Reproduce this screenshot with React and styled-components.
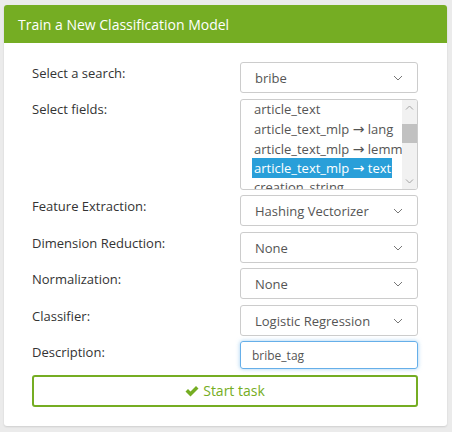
import React from 'react';
import styled, { createGlobalStyle } from 'styled-components';

const GlobalStyle = createGlobalStyle`
  html, body {
    margin: 0;
    padding: 0;
  }
  body {
    background: #ebebeb;
    font-family: 'Open Sans', 'Liberation Sans', sans-serif;
    color: #333;
  }
`;

const Page = styled.div`
  width: 452px;
  height: 432px;
  padding: 5px 5px 0 4px;
  box-sizing: border-box;
`;

const Panel = styled.div`
  width: 443px;
  background: #fff;
  border-radius: 3px;
  box-shadow: 0 1px 2px rgba(0, 0, 0, 0.12);
  overflow: hidden;
`;

const Header = styled.div`
  height: 38px;
  background: #75ad23;
  color: #fff;
  font-size: 14px;
  padding-left: 14px;
  display: flex;
  align-items: center;
`;

const Body = styled.div`
  padding: 19px 29px 19px 28px;
  display: flex;
  flex-direction: column;
  gap: 5.5px;
`;

const Row = styled.div`
  display: grid;
  grid-template-columns: 208px 178px;
  align-items: start;
`;

const Label = styled.div`
  font-size: 13px;
  color: #333;
  padding-top: ${p => p.$top ?? 2}px;
`;

const Select = styled.div`
  height: 31px;
  box-sizing: border-box;
  border: 1px solid #ccc;
  border-radius: 3px;
  display: flex;
  align-items: center;
  justify-content: space-between;
  padding: 1px 14px 0 14px;
  font-size: 13px;
  color: #555;
`;

const Chevron = () => (
  <svg width="10" height="6" viewBox="0 0 10 6">
    <path d="M1 1 L5 5 L9 1" fill="none" stroke="#777" strokeWidth="1" />
  </svg>
);

const ListBox = styled.div`
  height: 91px;
  box-sizing: border-box;
  border: 1px solid #ccc;
  border-radius: 3px;
  display: flex;
  overflow: hidden;
`;

const Options = styled.div`
  flex: 1;
  padding: 0 0 0 11px;
  overflow: hidden;
  white-space: nowrap;
`;

const Option = styled.div`
  height: 19.5px;
  line-height: 19.5px;
  font-size: 13px;
  padding: 0 1px 0 2px;
  width: ${p => (p.$selected ? 'max-content' : 'auto')};
  color: ${p => (p.$selected ? '#fff' : '#555')};
  background: ${p => (p.$selected ? '#299fd9' : 'transparent')};
`;

const ArrowGlyph = styled.span`
  font-family: 'Noto Sans', 'DejaVu Sans', sans-serif;
  font-size: 14px;
`;

const Scrollbar = styled.div`
  width: 15px;
  background: #f1f1f1;
  display: flex;
  flex-direction: column;
  align-items: center;
  justify-content: space-between;
  position: relative;
  padding: 5px 0;
  box-sizing: border-box;
`;

const Thumb = styled.div`
  position: absolute;
  left: 0;
  top: 24px;
  width: 15px;
  height: 19px;
  background: #c1c1c1;
`;

const Arrow = ({ up }) => (
  <svg width="9" height="5" viewBox="0 0 9 5">
    <path
      d={up ? 'M1 4.5 L4.5 1 L8 4.5' : 'M1 0.5 L4.5 4 L8 0.5'}
      fill="none"
      stroke="#a3a3a3"
      strokeWidth="1"
    />
  </svg>
);

const Input = styled.div`
  height: 28px;
  box-sizing: border-box;
  border: 1px solid #66afe9;
  border-radius: 3px;
  box-shadow: 0 0 4px rgba(102, 175, 233, 0.6);
  display: flex;
  align-items: center;
  padding: 0 0 0 11px;
  font-size: 12px;
  color: #555;
`;

const Button = styled.div`
  height: 32px;
  box-sizing: border-box;
  border: 2px solid #75ad23;
  border-radius: 3px;
  display: flex;
  align-items: center;
  justify-content: center;
  gap: 4px;
  color: #75ad23;
  font-size: 14px;
`;

const Check = () => (
  <svg width="14" height="12" viewBox="0 0 14 12">
    <path d="M0.5 6.5 L3 4 L5.5 6.5 L11 1 L13.5 3.5 L5.5 11.5 Z" fill="#75ad23" />
  </svg>
);

const selects = [
  ['Feature Extraction:', 'Hashing Vectorizer'],
  ['Dimension Reduction:', 'None'],
  ['Normalization:', 'None'],
  ['Classifier:', 'Logistic Regression'],
];

const fields = [
  ['article_text'],
  ['article_text_mlp', 'lang'],
  ['article_text_mlp', 'lemmas'],
  ['article_text_mlp', 'text'],
  ['creation_string'],
];

export default function App() {
  return (
    <Page>
      <GlobalStyle />
      <Panel>
        <Header>Train a New Classification Model</Header>
        <Body>
          <Row>
            <Label>Select a search:</Label>
            <Select>
              bribe
              <Chevron />
            </Select>
          </Row>
          <Row>
            <Label $top={1}>Select fields:</Label>
            <ListBox>
              <Options>
                {fields.map(([a, b], i) => (
                  <Option key={i} $selected={i === 3}>
                    {a}
                    {b && (
                      <>
                        {' '}
                        <ArrowGlyph>→</ArrowGlyph> {b}
                      </>
                    )}
                  </Option>
                ))}
              </Options>
              <Scrollbar>
                <Arrow up />
                <Thumb />
                <Arrow />
              </Scrollbar>
            </ListBox>
          </Row>
          {selects.map(([label, value]) => (
            <Row key={label}>
              <Label>{label}</Label>
              <Select>
                {value}
                <Chevron />
              </Select>
            </Row>
          ))}
          <Row>
            <Label>Description:</Label>
            <Input>bribe_tag</Input>
          </Row>
          <Button>
            <Check />
            Start task
          </Button>
        </Body>
      </Panel>
    </Page>
  );
}
